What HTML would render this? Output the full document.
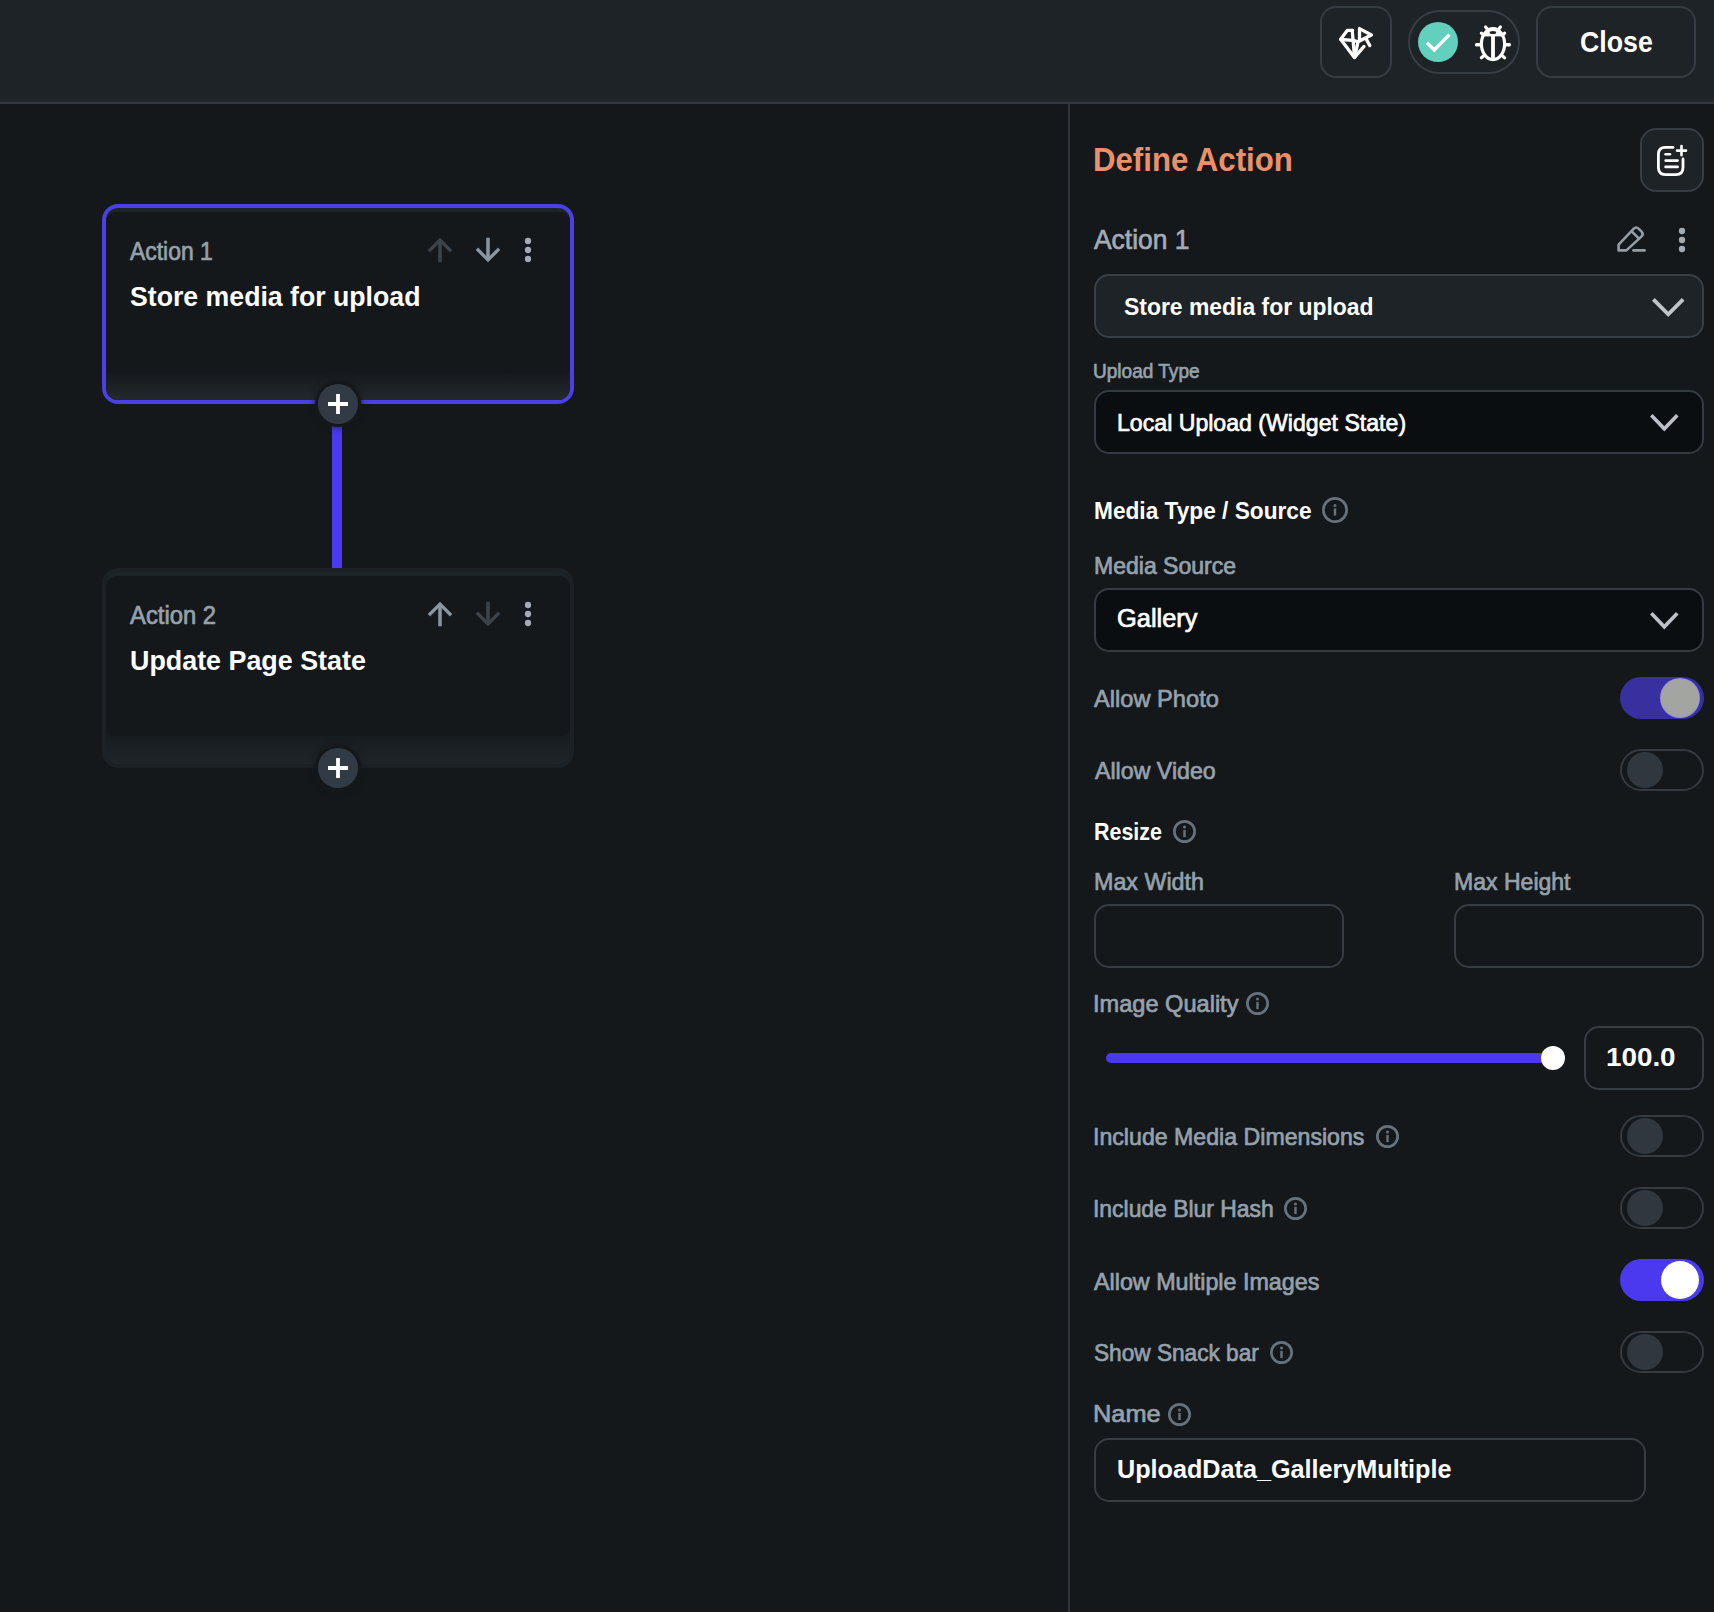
<!DOCTYPE html>
<html><head><meta charset="utf-8"><title>Action Flow Editor</title>
<style>
*{box-sizing:border-box;margin:0;padding:0}
html,body{width:1714px;height:1612px;background:#14181b;overflow:hidden}
body{position:relative;font-family:"Liberation Sans",sans-serif}
.a{position:absolute;display:block}
.t{position:absolute;white-space:nowrap;line-height:1;transform-origin:0 0}
.topbar{position:absolute;left:0;top:0;width:1714px;height:104px;background:linear-gradient(#1e2327 95px,#23282c 102px);border-bottom:2px solid #32383d}
.vline{position:absolute;left:1068px;top:104px;width:2px;height:1508px;background:#30363b}
.btn{position:absolute;border:2px solid #373d44;background:#1e2327;border-radius:16px}
.card{position:absolute;left:102px;width:472px;height:200px;border:4px solid #1b2125;border-radius:16px;background:#1d2428;overflow:hidden}
.card.sel{border-color:#4b3fe6}
.card .inner{position:absolute;left:0;right:0;top:4px;height:160px;background:#14181b;border-radius:10px 10px 8px 8px}
.card .grad{position:absolute;left:0;right:0;top:152px;height:40px;background:linear-gradient(#171c1f 12px,#1f2529)}
.card.sel .inner{border-radius:10px 10px 0 0}
.card.sel .grad{background:linear-gradient(#14181b 9px,#22282c)}
.conn{position:absolute;left:332px;top:404px;width:10px;height:164px;background:#4b39ef}
.plus{position:absolute;width:40px;height:40px;border-radius:50%;background:#323b45;box-shadow:0 0 0 3px #14181b,0 0 6px 3px #14181b}
.dd{position:absolute;left:1094px;width:610px;height:64px;border:2px solid #353b42;border-radius:15px;background:#0b0e10}
.inp{position:absolute;height:64px;border:2px solid #373d43;border-radius:15px;background:#14181b}
.tog{position:absolute;left:1620px;width:84px;height:42px;border-radius:21px}
.tog.off{border:2px solid #343a40;background:#14181b}
.tog.off i{position:absolute;left:5px;top:1px;width:36px;height:36px;border-radius:50%;background:#30373d}
.tog.on{background:#4b39ef}
.tog.on i{position:absolute;left:41px;top:2px;width:38px;height:38px;border-radius:50%;background:#fff}
.tog.on.dim{background:#38309f}
.tog.on.dim i{background:#a2a5a0;box-shadow:0 0 0 1px rgba(190,190,235,.7)}
</style></head><body>
<div class="topbar"></div>
<div class="vline"></div>

<!-- top bar buttons -->
<div class="btn" style="left:1320px;top:6px;width:72px;height:72px"></div>
<svg class="a" style="left:1320px;top:6px" width="72" height="72" viewBox="0 0 72 72" fill="none" stroke="#fff" stroke-width="3.3" stroke-linejoin="round" stroke-linecap="round">
<path d="M32.6 24.4 L27.2 24.4 L20.7 33.2 L34.4 51.6 L44 40.4"/>
<path d="M20.9 33.5 L33 34.3 L37.6 35.6"/>
<path d="M32.2 24.4 L33.1 34.3 L34.5 50.6"/>
<path d="M37.8 36.6 L35 50"/>
<path d="M39.5 22.6 L39.5 35 L51.4 29 Z"/>
<path d="M46.2 33 L49.8 39.6"/>
</svg>

<div class="btn" style="left:1408px;top:10px;width:112px;height:64px;border-radius:32px"></div>
<svg class="a" style="left:1418px;top:22px" width="40" height="40" viewBox="0 0 40 40"><circle cx="20" cy="20" r="20" fill="#63d0bd"/><path d="M9 20.8 L16.2 28 L31.4 12.6" fill="none" stroke="#fff" stroke-width="3.4"/></svg>
<svg class="a" style="left:1468px;top:18px" width="50" height="50" viewBox="0 0 50 50" fill="none" stroke="#fff" stroke-width="3.2" stroke-linecap="round">
<defs><clipPath id="bugc"><ellipse cx="25" cy="26.1" rx="11.6" ry="15.5"/></clipPath></defs>
<rect x="10" y="8" width="30" height="10.4" fill="#fff" stroke="none" clip-path="url(#bugc)"/>
<ellipse cx="25" cy="26.1" rx="11.6" ry="15.5"/>
<ellipse cx="24.9" cy="14.4" rx="3.3" ry="1.5" fill="#1e2327" stroke="none"/>
<path d="M25 18 V40" stroke-width="3.8" stroke-linecap="butt"/>
<path d="M8.6 26.7 H12.4 M37.6 26.7 H41.4" stroke-width="3.6"/>
<path d="M17.6 9 L20 12 M32.4 9 L30 12"/>
<path d="M13.4 15.2 L15.4 17.2 M36.6 15.2 L34.6 17.2"/>
<path d="M13.4 39.8 L15.8 37.8 M36.6 39.8 L34.2 37.8"/>
</svg>

<div class="btn" style="left:1536px;top:6px;width:160px;height:72px"></div>

<!-- canvas cards -->
<div class="conn"></div>
<div class="card sel" style="top:204px"><div class="grad"></div><div class="inner"></div></div>
<svg class="a" style="left:422px;top:232px" width="36" height="36" viewBox="0 0 24 24"><path fill="#3c444b" stroke="#3c444b" stroke-width="0.35" d="M4 12l1.41 1.41L11 7.83V20h2V7.83l5.58 5.59L20 12l-8-8-8 8z"/></svg><svg class="a" style="left:470px;top:232px" width="36" height="36" viewBox="0 0 24 24"><path transform="rotate(180 12 12)" fill="#8a96a1" stroke="#8a96a1" stroke-width="0.35" d="M4 12l1.41 1.41L11 7.83V20h2V7.83l5.58 5.59L20 12l-8-8-8 8z"/></svg><svg class="a" style="left:510px;top:232px" width="36" height="36" viewBox="0 0 24 24"><g fill="#a4abb2"><circle cx="12" cy="6" r="2.1"/><circle cx="12" cy="12" r="2.1"/><circle cx="12" cy="18" r="2.1"/></g></svg>
<div class="card" style="top:568px"><div class="grad"></div><div class="inner"></div></div>
<svg class="a" style="left:422px;top:596px" width="36" height="36" viewBox="0 0 24 24"><path fill="#8a96a1" stroke="#8a96a1" stroke-width="0.35" d="M4 12l1.41 1.41L11 7.83V20h2V7.83l5.58 5.59L20 12l-8-8-8 8z"/></svg><svg class="a" style="left:470px;top:596px" width="36" height="36" viewBox="0 0 24 24"><path transform="rotate(180 12 12)" fill="#3c444b" stroke="#3c444b" stroke-width="0.35" d="M4 12l1.41 1.41L11 7.83V20h2V7.83l5.58 5.59L20 12l-8-8-8 8z"/></svg><svg class="a" style="left:510px;top:596px" width="36" height="36" viewBox="0 0 24 24"><g fill="#a4abb2"><circle cx="12" cy="6" r="2.1"/><circle cx="12" cy="12" r="2.1"/><circle cx="12" cy="18" r="2.1"/></g></svg>
<div class="plus" style="left:318px;top:384px"><svg width="40" height="40" viewBox="0 0 40 40"><path d="M10 20H30M20 10V30" stroke="#fff" stroke-width="3.8" fill="none"/></svg></div>
<div class="plus" style="left:318px;top:748px"><svg width="40" height="40" viewBox="0 0 40 40"><path d="M10 20H30M20 10V30" stroke="#fff" stroke-width="3.8" fill="none"/></svg></div>

<!-- panel -->
<div class="btn" style="left:1640px;top:128px;width:64px;height:64px"></div>
<svg class="a" style="left:1640px;top:128px" width="64" height="64" viewBox="0 0 64 64" fill="none" stroke="#fff" stroke-width="2.8" stroke-linecap="round">
<path d="M33 19.4 H25.4 Q18.4 19.4 18.4 26.4 V39.6 Q18.4 46.6 25.4 46.6 H36 Q43 46.6 43 39.6 V31"/>
<path d="M25.6 26.2 H30" stroke-width="2.6"/><path d="M25.6 32.6 H37.6 M25.6 38.9 H37.6" stroke-width="2.6"/>
<path d="M37 22.6 H46 M41.5 18 V27.2" stroke-width="2.6"/>
</svg>

<!-- pencil -->
<svg class="a" style="left:1614px;top:222px" width="36" height="36" viewBox="0 0 36 36" fill="none" stroke="#949da6" stroke-width="2.6" stroke-linejoin="round" stroke-linecap="round">
<path d="M4.6 28.4 V22.6 L19.8 6.6 Q22.2 4.4 24.6 6.6 L27.6 9.6 Q29.8 12 27.6 14.4 L12.4 28.4 Z"/>
<path d="M17.6 9.4 L25 16.6"/>
<path d="M19.4 28.4 H30.6"/>
</svg>
<svg class="a" style="left:1664px;top:222px" width="36" height="36" viewBox="0 0 24 24"><g fill="#a4abb2"><circle cx="12" cy="6" r="2.1"/><circle cx="12" cy="12" r="2.1"/><circle cx="12" cy="18" r="2.1"/></g></svg>

<div class="dd" style="top:274px;background:#1e2327;border-color:#393f46"></div>
<svg class="a" style="left:1648.7px;top:294.7px" width="38.50" height="25.10" viewBox="-3 -3 38.50 25.10"><path d="M1.35 1.34 L16.25 16.40 L31.15 1.34" fill="none" stroke="#c0c5cb" stroke-width="3.8" stroke-linecap="butt" stroke-linejoin="miter"/></svg>
<div class="dd" style="top:390px"></div>
<svg class="a" style="left:1646.8px;top:411px" width="34.60" height="23.40" viewBox="-3 -3 34.60 23.40"><path d="M1.30 1.25 L14.30 14.80 L27.30 1.25" fill="none" stroke="#bcc1c7" stroke-width="3.6" stroke-linecap="butt" stroke-linejoin="miter"/></svg>
<svg class="a" style="left:1322.0px;top:497.0px" width="26" height="26" viewBox="0 0 26 26"><circle cx="13.0" cy="13.0" r="11.65" fill="none" stroke="#67727c" stroke-width="2.7"/><circle cx="13.0" cy="8.4" r="1.5" fill="#67727c"/><rect x="11.8" y="11.4" width="2.4" height="7.2" fill="#67727c"/></svg>
<div class="dd" style="top:588px"></div>
<svg class="a" style="left:1646.8px;top:609px" width="34.60" height="23.40" viewBox="-3 -3 34.60 23.40"><path d="M1.30 1.25 L14.30 14.80 L27.30 1.25" fill="none" stroke="#bcc1c7" stroke-width="3.6" stroke-linecap="butt" stroke-linejoin="miter"/></svg>
<div class="tog on dim" style="top:677px"><i></i></div>
<div class="tog off" style="top:749px"><i></i></div>
<svg class="a" style="left:1172.5px;top:819.5px" width="23" height="23" viewBox="0 0 23 23"><circle cx="11.5" cy="11.5" r="10.15" fill="none" stroke="#67727c" stroke-width="2.7"/><circle cx="11.5" cy="6.9" r="1.5" fill="#67727c"/><rect x="10.3" y="9.9" width="2.4" height="7.2" fill="#67727c"/></svg>
<div class="inp" style="left:1094px;top:904px;width:250px"></div>
<div class="inp" style="left:1454px;top:904px;width:250px"></div>
<svg class="a" style="left:1245.5px;top:992.0px" width="23" height="23" viewBox="0 0 23 23"><circle cx="11.5" cy="11.5" r="10.15" fill="none" stroke="#67727c" stroke-width="2.7"/><circle cx="11.5" cy="6.9" r="1.5" fill="#67727c"/><rect x="10.3" y="9.9" width="2.4" height="7.2" fill="#67727c"/></svg>
<div class="a" style="left:1106px;top:1053px;width:450px;height:10px;border-radius:5px;background:#4b39ef"></div>
<div class="a" style="left:1541px;top:1046px;width:24px;height:24px;border-radius:50%;background:#fff"></div>
<div class="inp" style="left:1584px;top:1026px;width:120px"></div>
<div class="tog off" style="top:1115px"><i></i></div>
<svg class="a" style="left:1375.5px;top:1124.5px" width="23" height="23" viewBox="0 0 23 23"><circle cx="11.5" cy="11.5" r="10.15" fill="none" stroke="#67727c" stroke-width="2.7"/><circle cx="11.5" cy="6.9" r="1.5" fill="#67727c"/><rect x="10.3" y="9.9" width="2.4" height="7.2" fill="#67727c"/></svg>
<div class="tog off" style="top:1187px"><i></i></div>
<svg class="a" style="left:1283.5px;top:1196.5px" width="23" height="23" viewBox="0 0 23 23"><circle cx="11.5" cy="11.5" r="10.15" fill="none" stroke="#67727c" stroke-width="2.7"/><circle cx="11.5" cy="6.9" r="1.5" fill="#67727c"/><rect x="10.3" y="9.9" width="2.4" height="7.2" fill="#67727c"/></svg>
<div class="tog on" style="top:1259px"><i></i></div>
<div class="tog off" style="top:1331px"><i></i></div>
<svg class="a" style="left:1269.5px;top:1341.0px" width="23" height="23" viewBox="0 0 23 23"><circle cx="11.5" cy="11.5" r="10.15" fill="none" stroke="#67727c" stroke-width="2.7"/><circle cx="11.5" cy="6.9" r="1.5" fill="#67727c"/><rect x="10.3" y="9.9" width="2.4" height="7.2" fill="#67727c"/></svg>
<svg class="a" style="left:1167.5px;top:1402.5px" width="23" height="23" viewBox="0 0 23 23"><circle cx="11.5" cy="11.5" r="10.15" fill="none" stroke="#67727c" stroke-width="2.7"/><circle cx="11.5" cy="6.9" r="1.5" fill="#67727c"/><rect x="10.3" y="9.9" width="2.4" height="7.2" fill="#67727c"/></svg>
<div class="inp" style="left:1094px;top:1438px;width:552px"></div>

<div class="t" style="left:1580.11px;top:27.000px;font-size:30.0px;transform:scaleX(0.8911);color:#fff;font-weight:700;">Close</div>
<div class="t" style="left:130.30px;top:239.000px;font-size:25.5px;transform:scaleX(0.8982);color:#95a1ac;-webkit-text-stroke:0.7px #95a1ac;">Action 1</div>
<div class="t" style="left:130.30px;top:283.000px;font-size:28.0px;transform:scaleX(0.9525);color:#fff;font-weight:700;">Store media for upload</div>
<div class="t" style="left:130.30px;top:603.000px;font-size:25.5px;transform:scaleX(0.9345);color:#95a1ac;-webkit-text-stroke:0.7px #95a1ac;">Action 2</div>
<div class="t" style="left:129.84px;top:647.000px;font-size:28.0px;transform:scaleX(0.9592);color:#fff;font-weight:700;">Update Page State</div>
<div class="t" style="left:1093.38px;top:144.000px;font-size:32.5px;transform:scaleX(0.9596);color:#ea9169;font-weight:700;">Define Action</div>
<div class="t" style="left:1094.30px;top:226.000px;font-size:28.0px;transform:scaleX(0.9433);color:#a3acb6;-webkit-text-stroke:0.7px #a3acb6;">Action 1</div>
<div class="t" style="left:1124.00px;top:295.000px;font-size:24.5px;transform:scaleX(0.9351);color:#fff;font-weight:700;">Store media for upload</div>
<div class="t" style="left:1093.47px;top:361.000px;font-size:20.5px;transform:scaleX(0.9288);color:#95a1ac;-webkit-text-stroke:0.7px #95a1ac;">Upload Type</div>
<div class="t" style="left:1116.81px;top:411.000px;font-size:24.5px;transform:scaleX(0.9435);color:#fff;-webkit-text-stroke:0.7px #fff;">Local Upload (Widget State)</div>
<div class="t" style="left:1093.84px;top:500.000px;font-size:23.5px;transform:scaleX(0.9647);color:#fff;font-weight:700;">Media Type / Source</div>
<div class="t" style="left:1093.80px;top:555.000px;font-size:23.0px;transform:scaleX(1.0006);color:#95a1ac;-webkit-text-stroke:0.7px #95a1ac;">Media Source</div>
<div class="t" style="left:1117.48px;top:606.000px;font-size:25.0px;transform:scaleX(1.0167);color:#fff;-webkit-text-stroke:0.7px #fff;">Gallery</div>
<div class="t" style="left:1093.70px;top:687.000px;font-size:24.5px;transform:scaleX(0.9654);color:#95a1ac;-webkit-text-stroke:0.7px #95a1ac;">Allow Photo</div>
<div class="t" style="left:1094.50px;top:759.000px;font-size:24.0px;transform:scaleX(0.9661);color:#95a1ac;-webkit-text-stroke:0.7px #95a1ac;">Allow Video</div>
<div class="t" style="left:1093.89px;top:821.000px;font-size:23.5px;transform:scaleX(0.9129);color:#fff;font-weight:700;">Resize</div>
<div class="t" style="left:1094.11px;top:871.000px;font-size:23.5px;transform:scaleX(0.9906);color:#95a1ac;-webkit-text-stroke:0.7px #95a1ac;">Max Width</div>
<div class="t" style="left:1454.02px;top:871.000px;font-size:23.5px;transform:scaleX(0.9804);color:#95a1ac;-webkit-text-stroke:0.7px #95a1ac;">Max Height</div>
<div class="t" style="left:1093.14px;top:992.000px;font-size:24.0px;transform:scaleX(0.9824);color:#95a1ac;-webkit-text-stroke:0.7px #95a1ac;">Image Quality</div>
<div class="t" style="left:1605.71px;top:1045.000px;font-size:25.5px;transform:scaleX(1.0905);color:#fff;font-weight:700;">100.0</div>
<div class="t" style="left:1093.07px;top:1125.000px;font-size:24.0px;transform:scaleX(0.9643);color:#95a1ac;-webkit-text-stroke:0.7px #95a1ac;">Include Media Dimensions</div>
<div class="t" style="left:1093.09px;top:1197.000px;font-size:24.0px;transform:scaleX(0.9539);color:#95a1ac;-webkit-text-stroke:0.7px #95a1ac;">Include Blur Hash</div>
<div class="t" style="left:1094.00px;top:1270.000px;font-size:24.0px;transform:scaleX(0.9712);color:#95a1ac;-webkit-text-stroke:0.7px #95a1ac;">Allow Multiple Images</div>
<div class="t" style="left:1093.56px;top:1341.000px;font-size:24.0px;transform:scaleX(0.9432);color:#95a1ac;-webkit-text-stroke:0.7px #95a1ac;">Show Snack bar</div>
<div class="t" style="left:1092.93px;top:1402.000px;font-size:24.5px;transform:scaleX(1.0346);color:#95a1ac;-webkit-text-stroke:0.7px #95a1ac;">Name</div>
<div class="t" style="left:1117.29px;top:1457.000px;font-size:25.0px;transform:scaleX(1.0075);color:#fff;font-weight:700;">UploadData_GalleryMultiple</div>
</body></html>
